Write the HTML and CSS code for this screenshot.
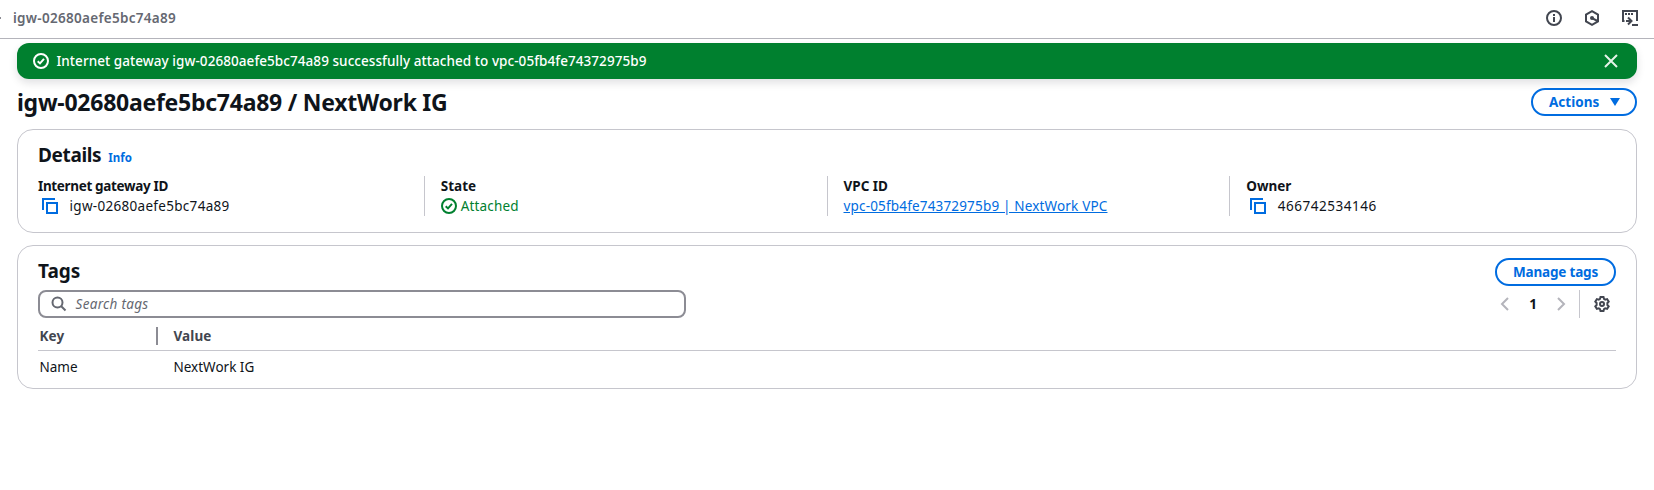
FILE: index.html
```html
<!DOCTYPE html>
<html lang="en">
<head>
<meta charset="utf-8">
<title>Internet gateway details</title>
<link rel="stylesheet" href="styles.css">
</head>
<body>
<header class="topbar">
  <div class="crumbs"><span class="crumb-edge"></span><span class="crumb">igw-02680aefe5bc74a89</span></div>
  <div class="tools">
    <svg class="icon" viewBox="0 0 16 16"><circle cx="8" cy="8" r="7"/><path d="M8 7v5M8 4v2"/></svg>
    <svg class="icon" viewBox="0 0 16 16"><path d="M8 1.200l6 3.400v6.800l-6 3.400-6-3.400V4.600z"/><circle cx="8" cy="8" r="2" class="solid"/><path d="M8.500 8.300l5 2.700"/></svg>
    <svg class="icon" viewBox="0 0 16 16"><path d="M2.500 11H1V1h14v10M3 4h2M6 4h2M9 4h2M4 11h5M6 7.500l3.500 3.500L6 14.500M10 15h6"/></svg>
  </div>
</header>
<main class="page">
  <div class="flash">
    <svg class="icon" viewBox="0 0 16 16"><circle cx="8" cy="8" r="7"/><path d="M4.700 8.200l2.300 2.200 4-4.500"/></svg>
    <span class="flash-text">Internet gateway igw-02680aefe5bc74a89 successfully attached to vpc-05fb4fe74372975b9</span>
    <svg class="icon close" viewBox="0 0 16 16"><path d="M2 2l12 12M14 2L2 14"/></svg>
  </div>
  <div class="title-row">
    <h1 class="title">igw-02680aefe5bc74a89 / NextWork IG</h1>
    <button class="button actions"><span>Actions</span><svg class="caret" viewBox="0 0 10 8"><path d="M0 0h10L5 8z"/></svg></button>
  </div>
  <section class="card details">
    <div class="heading-row"><h2 class="heading details-heading">Details</h2><a class="info">Info</a></div>
    <div class="fields">
      <div class="field"><div class="label gateway-label">Internet gateway ID</div>
        <div class="value copyable"><svg class="icon blue" viewBox="0 0 16 16"><path d="M1 12V1h12"/><path d="M5 5h10v10H5z"/></svg><span class="id">igw-02680aefe5bc74a89</span></div></div>
      <div class="field"><div class="label">State</div>
        <div class="value status"><svg class="icon" viewBox="0 0 16 16"><circle cx="8" cy="8" r="7"/><path d="M4.700 8.200l2.300 2.200 4-4.500"/></svg><span>Attached</span></div></div>
      <div class="field"><div class="label">VPC ID</div>
        <div class="value"><a class="link">vpc-05fb4fe74372975b9 | NextWork VPC</a></div></div>
      <div class="field"><div class="label">Owner</div>
        <div class="value copyable"><svg class="icon blue" viewBox="0 0 16 16"><path d="M1 12V1h12"/><path d="M5 5h10v10H5z"/></svg><span class="owner">466742534146</span></div></div>
    </div>
  </section>
  <section class="card tags">
    <div class="tags-head"><h2 class="heading">Tags</h2><button class="button manage">Manage tags</button></div>
    <div class="filter-row">
      <div class="search"><svg class="icon" viewBox="0 0 16 16"><circle cx="6.500" cy="6.500" r="5"/><path d="M10 10l4.500 4.500"/></svg><span class="placeholder">Search tags</span></div>
      <div class="pager">
        <svg class="icon arrow" viewBox="0 0 16 16"><path d="M11 2L5 8l6 6"/></svg>
        <span class="page-number">1</span>
        <svg class="icon arrow" viewBox="0 0 16 16"><path d="M5 2l6 6-6 6"/></svg>
        <span class="rule"></span>
        <svg class="icon gear" viewBox="0 0 16 16"><path d="M6.500 1h3l.5 1.900 1.200.7 1.900-.5 1.600 2.600L13.400 7v2l1.300 1.300-1.600 2.600-1.900-.5-1.200.7-.5 1.900h-3L6 13.100l-1.200-.7-1.900.5-1.600-2.600L2.600 9V7L1.300 5.700l1.600-2.600 1.900.5L6 2.900z"/><circle cx="8" cy="8" r="2"/></svg>
      </div>
    </div>
    <div class="row head"><div class="key">Key</div><div>Value</div></div>
    <div class="row body"><div class="key">Name</div><div>NextWork IG</div></div>
  </section>
</main>
</body>
</html>
```
FILE: styles.css
```css
* { box-sizing: border-box; }
body { margin: 0; background: #fff; color: #0f141a; font: 13.5px/20px "Noto Sans", "Open Sans", sans-serif; }
h1, h2 { margin: 0; }
.icon { width: 16px; height: 16px; flex: none; display: block; fill: none; stroke: currentColor; stroke-width: 2; }
.icon .solid { fill: currentColor; stroke: none; }
.topbar { height: 39px; border-bottom: 1px solid #b4b4bb; display: flex; justify-content: space-between; align-items: center; padding: 0 16px 2px 0; }
.crumbs { display: flex; align-items: center; gap: 12px; color: #656871; font-weight: 600; letter-spacing: .293px; }
.crumb-edge { width: 1px; height: 2px; background: #8c8c94; }
.tools { display: flex; gap: 22px; color: #424650; }
.page { padding: 4px 17px 0; }
.flash { height: 36px; border-radius: 12px; background: #00802f; color: #fff; display: flex; align-items: center; gap: 7.5px; padding: 0 18px 0 16px; box-shadow: 0 4px 8px rgba(0, 7, 22, .12); font-weight: 500; letter-spacing: .064px; }
.flash .close { margin-left: auto; color: #e5f3e9; }
.title-row { display: flex; justify-content: space-between; align-items: flex-start; height: 50px; padding-top: 9px; }
.title { font-size: 23px; line-height: 28px; font-weight: 700; letter-spacing: -.255px; }
.button { height: 28px; border: 2px solid #006ce0; border-radius: 14px; background: #fff; color: #006ce0; font: 700 13.5px/20px "Noto Sans", "Open Sans", sans-serif; padding: 0; display: flex; align-items: center; justify-content: center; }
.button.manage { width: 121px; letter-spacing: -.18px; white-space: nowrap; }
.button.actions { width: 106px; justify-content: space-between; padding: 0 15px 0 16px; }
.caret { width: 10px; height: 8px; fill: #006ce0; }
.card { border: 1px solid #c6c6cd; border-radius: 16px; padding: 0 20px; }
.details { height: 104px; padding-top: 12px; margin-bottom: 12px; }
.heading-row { display: flex; align-items: baseline; gap: 7px; height: 34px; }
.heading { font-size: 19px; line-height: 26px; font-weight: 700; }
.details-heading { letter-spacing: -.36px; }
.info { font-size: 11.5px; font-weight: 700; color: #006ce0; }
.fields { display: grid; grid-template-columns: repeat(4, 1fr); gap: 33px; }
.field { height: 40px; }
.field + .field { border-left: 1px solid #c6c6cd; margin-left: -17px; padding-left: 16px; }
.label { font-weight: 700; }
.gateway-label { letter-spacing: -.34px; }
.value { display: flex; align-items: center; height: 20px; }
.copyable { padding-left: 4px; gap: 11.5px; }
.id { letter-spacing: .3px; }
.owner { letter-spacing: .527px; }
.status { gap: 4px; color: #00802f; letter-spacing: .164px; }
.blue, .link { color: #006ce0; }
.link { text-decoration: underline; letter-spacing: .172px; }
.tags { height: 144px; padding-top: 12px; }
.tags-head { display: flex; justify-content: space-between; height: 32px; }
.filter-row { display: flex; justify-content: space-between; height: 28px; }
.search { width: 648px; border: 2px solid #8c8c94; border-radius: 8px; display: flex; align-items: center; gap: 8.5px; padding-left: 11px; color: #656871; }
.placeholder { font-style: italic; letter-spacing: .311px; }
.pager { display: flex; align-items: center; padding-right: 6px; }
.arrow { color: #b4b4bb; }
.page-number { width: 40px; text-align: center; font-weight: 700; }
.rule { width: 1px; height: 28px; background: #c6c6cd; margin: 0 14px 0 10px; }
.gear { color: #424650; }
.row { display: flex; padding-left: 1.500px; }
.row.head { height: 33px; padding-top: 9px; border-bottom: 1px solid #c6c6cd; color: #424650; font-weight: 700; letter-spacing: .1px; line-height: 18px; }
.row.body { padding-top: 6px; }
.key { width: 134px; }
.head .key { border-right: 2px solid #8c8c94; height: 18px; width: 118.500px; margin-right: 15.500px; }
```
